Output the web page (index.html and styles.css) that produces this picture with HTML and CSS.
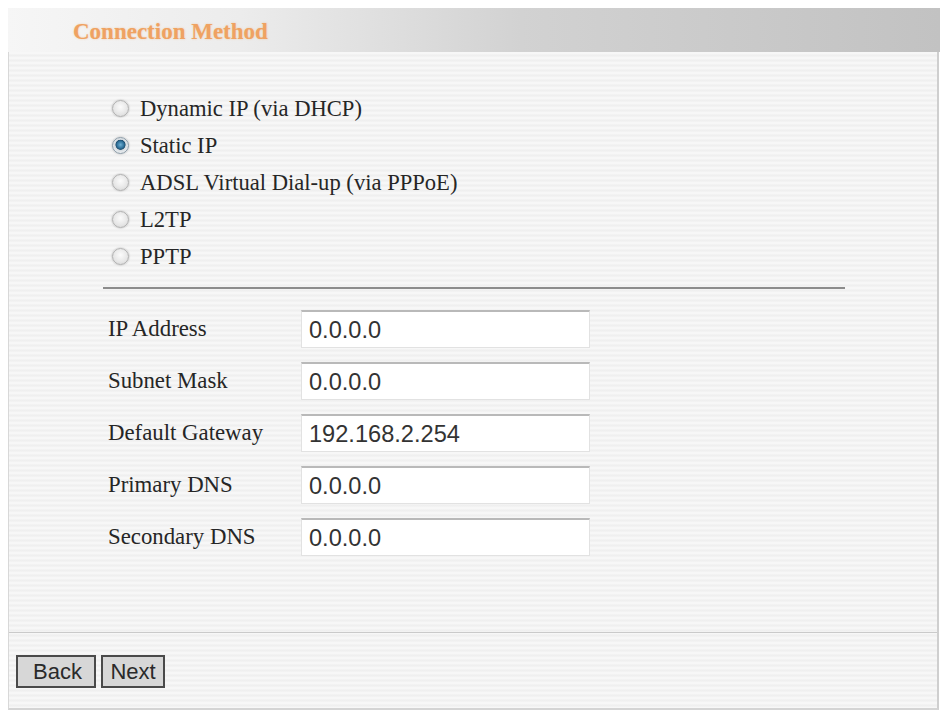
FILE: index.html
```html
<!DOCTYPE html>
<html>
<head>
<meta charset="utf-8">
<title>Connection Method</title>
<link rel="stylesheet" href="styles.css">
</head>
<body>
<div class="page">
  <div class="panel">
    <div class="header"><span class="title">Connection Method</span></div>
    <div class="body">
      <div class="main">
        <div class="content">
          <div class="radios">
            <label class="radio-row"><input type="radio" name="m" class="radio"><span>Dynamic IP (via DHCP)</span></label>
            <label class="radio-row"><input type="radio" name="m" class="radio" checked><span>Static IP</span></label>
            <label class="radio-row"><input type="radio" name="m" class="radio"><span>ADSL Virtual Dial-up (via PPPoE)</span></label>
            <label class="radio-row"><input type="radio" name="m" class="radio"><span>L2TP</span></label>
            <label class="radio-row"><input type="radio" name="m" class="radio"><span>PPTP</span></label>
          </div>
          <div class="divider"></div>
          <div class="fields">
            <div class="field"><span class="label">IP Address</span><input class="text" type="text" value="0.0.0.0"></div>
            <div class="field"><span class="label">Subnet Mask</span><input class="text" type="text" value="0.0.0.0"></div>
            <div class="field"><span class="label">Default Gateway</span><input class="text" type="text" value="192.168.2.254"></div>
            <div class="field"><span class="label">Primary DNS</span><input class="text" type="text" value="0.0.0.0"></div>
            <div class="field"><span class="label">Secondary DNS</span><input class="text" type="text" value="0.0.0.0"></div>
          </div>
        </div>
      </div>
      <div class="footer">
        <button class="btn btn-back">Back</button>
        <button class="btn btn-next">Next</button>
      </div>
    </div>
  </div>
</div>
</body>
</html>
```
FILE: styles.css
```css
html, body {
  margin: 0;
  padding: 0;
  background: #ffffff;
}
.page {
  padding: 8px 0 0 8px;
}
.panel {
  width: 932px;
  display: flex;
  flex-direction: column;
}
.header {
  height: 44px;
  display: flex;
  align-items: center;
  padding-left: 65px;
  background: linear-gradient(to right, #f6f6f6 0%, #ececec 25%, #d2d2d2 55%, #c2c2c2 100%);
}
.title {
  font-family: "Liberation Serif", "Times New Roman", serif;
  font-weight: bold;
  font-size: 23px;
  color: #efa262;
  text-shadow: 0 0 2px rgba(240, 170, 100, 0.55);
  margin-top: 4px;
}
.body {
  width: 928px;
  border-left: 1px solid #d8d8d8;
  border-right: 2px solid #cfcfcf;
  border-bottom: 2px solid #d4d4d4;
  background-color: #f3f3f3;
  background-image: repeating-linear-gradient(to bottom, #f7f7f7 0px, #f7f7f7 2px, #eeeeee 3px, #f4f4f4 5px);
  display: flex;
  flex-direction: column;
}
.main {
  border-bottom: 1px solid #cacaca;
}
.content {
  margin-left: 94px;
  padding-top: 38px;
  padding-bottom: 76px;
}
.radios {
  display: flex;
  flex-direction: column;
}
.radio-row {
  height: 37px;
  display: flex;
  align-items: center;
  padding-left: 9px;
  font-family: "Liberation Serif", "Times New Roman", serif;
  font-size: 22.6px;
  color: #262626;
}
.radio {
  appearance: none;
  -webkit-appearance: none;
  margin: 0 11px 0 0;
  width: 17px;
  height: 17px;
  border-radius: 50%;
  border: 1px solid #b0b0b0;
  background: radial-gradient(circle at 50% 40%, #fbfbfb 0%, #e8e8e8 55%, #d2d2d2 100%);
  box-shadow: 0 0 1px 1px rgba(200, 200, 200, 0.5);
  box-sizing: border-box;
  flex: none;
}
.radio:checked {
  border-color: #8a9aa6;
  background: radial-gradient(circle at 50% 45%, #6fb0d4 0%, #2d6f98 32%, #1f4f70 42%, #d4dadf 48%, #e8ecef 70%, #c6ccd1 100%);
}
.divider {
  width: 742px;
  height: 0;
  border-top: 2px solid #8c8c8c;
  margin-top: 12px;
}
.fields {
  display: flex;
  flex-direction: column;
  gap: 14px;
  margin-top: 21px;
}
.field {
  display: flex;
  align-items: center;
  height: 38px;
}
.label {
  width: 193px;
  padding-left: 5px;
  font-family: "Liberation Serif", "Times New Roman", serif;
  font-size: 22.8px;
  color: #262626;
}
.text {
  box-sizing: border-box;
  width: 289px;
  height: 38px;
  margin: 0;
  padding: 2px 0 0 7px;
  border: 1px solid #e2e2e2;
  border-top: 2px solid #b9b9b9;
  background: #ffffff;
  font-family: "Liberation Sans", Arial, sans-serif;
  font-size: 23.6px;
  color: #333333;
  outline: none;
}
.footer {
  display: flex;
  gap: 5px;
  padding: 22px 0 20px 7px;
}
.btn {
  box-sizing: border-box;
  height: 33px;
  margin: 0;
  padding: 0;
  border: 2px solid #4a4a4a;
  background: #d7d7d7;
  font-family: "Liberation Sans", Arial, sans-serif;
  font-size: 22px;
  color: #2a2a2a;
  line-height: 29px;
}
.btn-back {
  width: 80px;
  padding-left: 3px;
}
.btn-next {
  width: 64px;
}
```
